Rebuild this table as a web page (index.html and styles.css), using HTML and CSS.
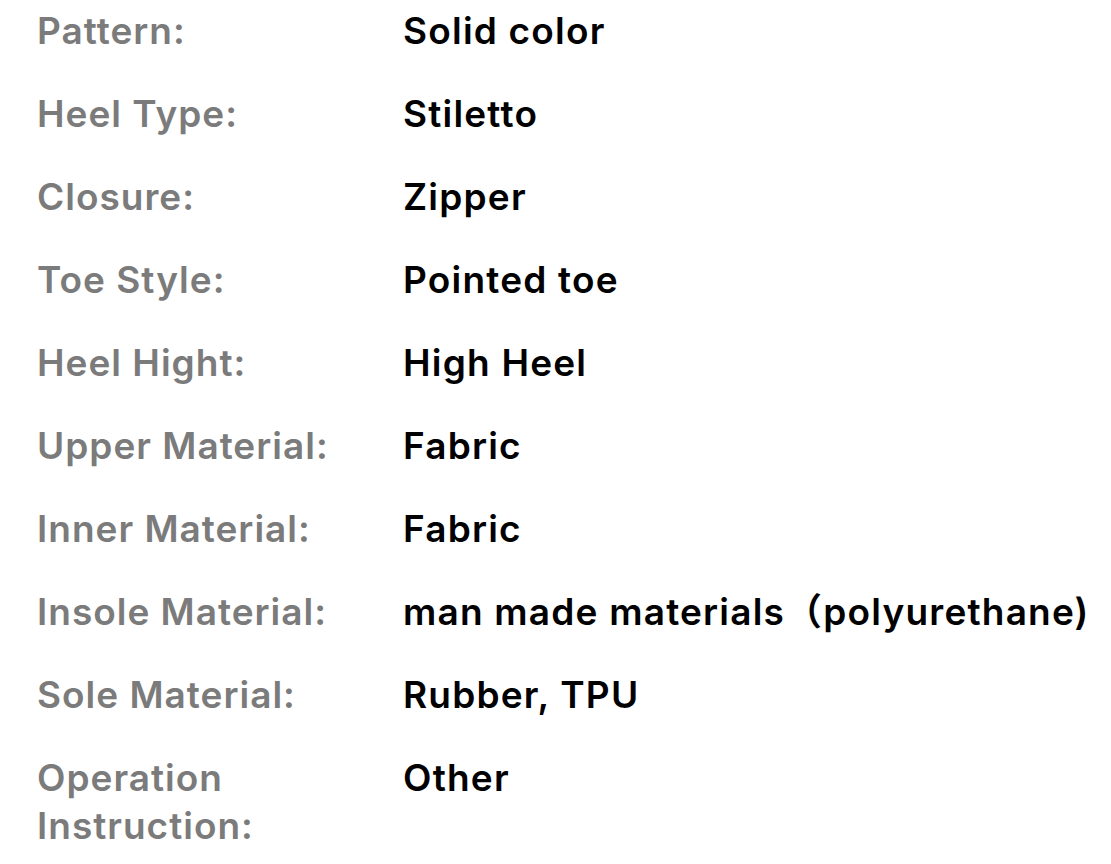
FILE: index.html
```html
<!DOCTYPE html>
<html lang="en">
<head>
<meta charset="utf-8">
<title>Specifications</title>
<link rel="stylesheet" href="styles.css">
</head>
<body>
<dl class="specs">
  <div class="row"><dt class="label">Pattern:</dt><dd class="value">Solid color</dd></div>
  <div class="row"><dt class="label">Heel Type:</dt><dd class="value">Stiletto</dd></div>
  <div class="row"><dt class="label">Closure:</dt><dd class="value">Zipper</dd></div>
  <div class="row"><dt class="label">Toe Style:</dt><dd class="value">Pointed toe</dd></div>
  <div class="row"><dt class="label">Heel Hight:</dt><dd class="value">High Heel</dd></div>
  <div class="row"><dt class="label">Upper Material:</dt><dd class="value">Fabric</dd></div>
  <div class="row"><dt class="label">Inner Material:</dt><dd class="value">Fabric</dd></div>
  <div class="row"><dt class="label">Insole Material:</dt><dd class="value">man made materials（polyurethane)</dd></div>
  <div class="row"><dt class="label">Sole Material:</dt><dd class="value">Rubber, TPU</dd></div>
  <div class="row"><dt class="label">Operation Instruction:</dt><dd class="value">Other</dd></div>
</dl>
</body>
</html>
```
FILE: styles.css
```css
html, body {
  margin: 0;
  padding: 0;
  background: #ffffff;
}
body {
  font-family: Inter, "Noto Sans CJK SC", sans-serif;
  font-size: 37px;
  line-height: 48px;
  letter-spacing: 1px;
  -webkit-font-smoothing: antialiased;
}
.specs {
  margin: 0;
  padding: 7px 0 0 37px;
  display: flex;
  flex-direction: column;
  gap: 35px;
}
.row {
  display: grid;
  grid-template-columns: 366px 1fr;
}
.label {
  margin: 0;
  color: #7b7b7b;
  font-weight: 600;
  width: 300px;
}
.value {
  margin: 0;
  color: #000000;
  font-weight: 600;
  letter-spacing: 1.2px;
  white-space: nowrap;
}
```
